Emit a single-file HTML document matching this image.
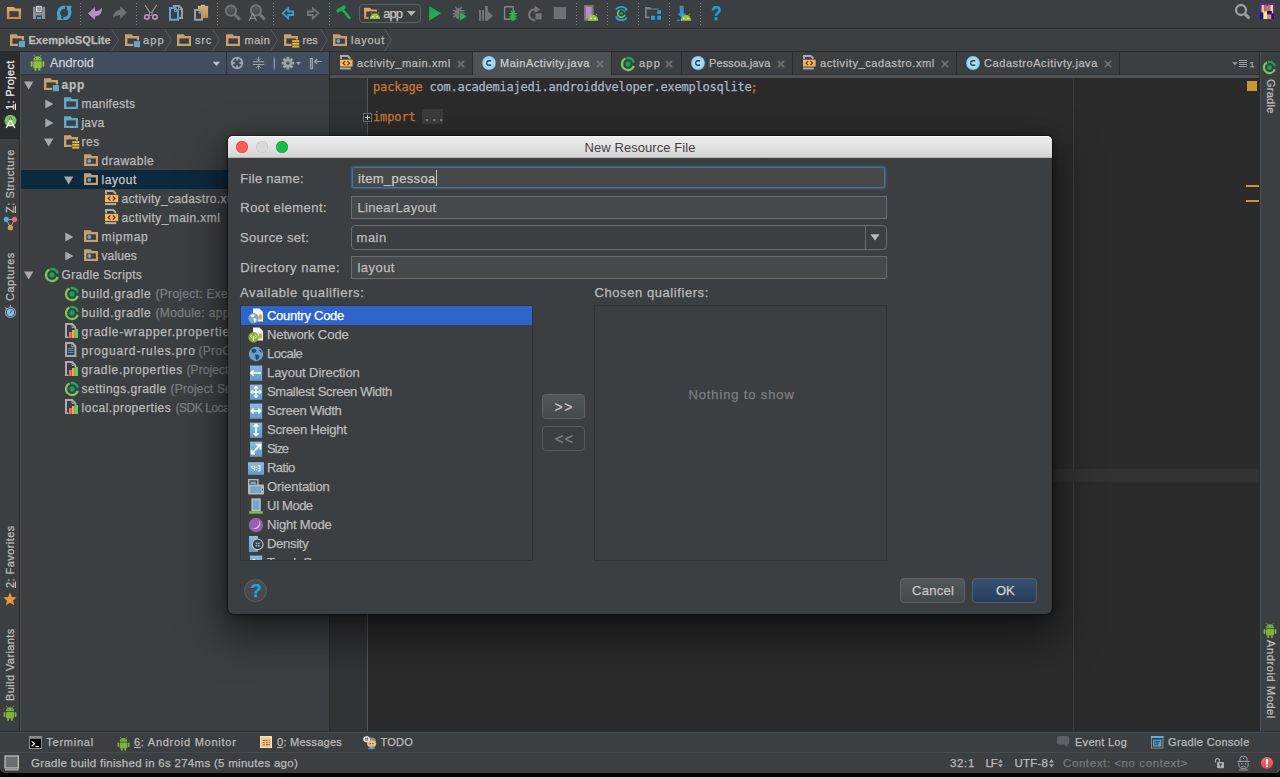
<!DOCTYPE html>
<html><head><meta charset="utf-8"><title>New Resource File</title>
<style>
html,body{margin:0;padding:0;background:#000;}
body{width:1280px;height:777px;position:relative;overflow:hidden;font-family:"Liberation Sans","DejaVu Sans",sans-serif;}
#root{position:absolute;left:0;top:0;width:1280px;height:777px;overflow:hidden;}
#root div,#root svg,#root span.t{position:absolute;}
span.t{white-space:nowrap;-webkit-text-stroke:0.25px currentColor;}
svg{overflow:visible;}
</style></head><body><div id="root">
<svg width="0" height="0" style="left:0;top:0"><defs>
<radialGradient id="cg" cx="0.5" cy="0.5" r="0.5"><stop offset="0" stop-color="#aee0fa"/><stop offset="0.75" stop-color="#a6dcf8"/><stop offset="1" stop-color="#8fd0f3"/></radialGradient>
<linearGradient id="qg" x1="0" y1="0" x2="0" y2="1"><stop offset="0" stop-color="#8bbbdc"/><stop offset="1" stop-color="#5f9bc6"/></linearGradient>
</defs></svg>
<div style="left:0px;top:0px;width:1280px;height:777px;background:#000000;"></div>
<div style="left:0px;top:0px;width:1280px;height:773px;background:#3c3f41;border-radius:0 0 5px 5px;"></div>
<div style="left:0px;top:28px;width:1280px;height:1px;background:#2a2c2d;"></div>
<div style="left:0px;top:29px;width:1280px;height:1px;background:#424547;"></div>
<div style="left:0px;top:51px;width:1280px;height:1px;background:#292b2c;"></div>
<div style="left:80px;top:3px;width:1px;height:22px;background:repeating-linear-gradient(#7a7d7f 0 1px,transparent 1px 3px);"></div>
<div style="left:136px;top:3px;width:1px;height:22px;background:repeating-linear-gradient(#7a7d7f 0 1px,transparent 1px 3px);"></div>
<div style="left:217px;top:3px;width:1px;height:22px;background:repeating-linear-gradient(#7a7d7f 0 1px,transparent 1px 3px);"></div>
<div style="left:273px;top:3px;width:1px;height:22px;background:repeating-linear-gradient(#7a7d7f 0 1px,transparent 1px 3px);"></div>
<div style="left:329px;top:3px;width:1px;height:22px;background:repeating-linear-gradient(#7a7d7f 0 1px,transparent 1px 3px);"></div>
<div style="left:576px;top:3px;width:1px;height:22px;background:repeating-linear-gradient(#7a7d7f 0 1px,transparent 1px 3px);"></div>
<div style="left:607px;top:3px;width:1px;height:22px;background:repeating-linear-gradient(#7a7d7f 0 1px,transparent 1px 3px);"></div>
<div style="left:638px;top:3px;width:1px;height:22px;background:repeating-linear-gradient(#7a7d7f 0 1px,transparent 1px 3px);"></div>
<div style="left:669px;top:3px;width:1px;height:22px;background:repeating-linear-gradient(#7a7d7f 0 1px,transparent 1px 3px);"></div>
<div style="left:700px;top:3px;width:1px;height:22px;background:repeating-linear-gradient(#7a7d7f 0 1px,transparent 1px 3px);"></div>
<svg style="left:0;top:0" width="1280" height="30" viewBox="0 0 1280 30"><defs><linearGradient id="og" x1="0" y1="0" x2="0" y2="1"><stop offset="0" stop-color="#dfac6a"/><stop offset="1" stop-color="#c5884a"/></linearGradient><linearGradient id="gg" x1="0" y1="0" x2="1" y2="1"><stop offset="0" stop-color="#17a04e"/><stop offset="1" stop-color="#27b85e"/></linearGradient><radialGradient id="lens" cx="0.5" cy="0.35" r="0.7"><stop offset="0" stop-color="#5a5c5e"/><stop offset="1" stop-color="#3c3f41"/></radialGradient></defs><path d="M6.9 6.9 H13.6 L15.4 8.6 H21 V19 H6.9 Z" fill="url(#og)"/><rect x="9.4" y="11.2" width="9.3" height="5.7" fill="#3c3f41"/><path d="M33 6.9 H45.1 V19 H33 Z" fill="#8f9294"/><rect x="35.6" y="5.8" width="6.6" height="6.4" rx="0.6" fill="#f2f2f2" stroke="#3c3f41" stroke-width="0.8"/><path d="M37 8 H41 M37 10 H41" stroke="#3a3c3e" stroke-width="1"/><rect x="36" y="15.4" width="5.8" height="3.6" fill="#3c3f41"/><rect x="37" y="17" width="4" height="2" fill="#3f9fdc"/><g fill="none" stroke="#4a9fd2" stroke-width="3.1"><path d="M63.23 18.41 A5.6 5.6 0 0 0 67.41 8.31"/><path d="M65.17 7.39 A5.6 5.6 0 0 0 60.99 17.49"/></g><path d="M65.4 5.7 H71.5 L70.6 11.6 Z" fill="#4a9fd2"/><path d="M63 20.1 H56.9 L57.8 14.2 Z" fill="#4a9fd2"/><path d="M87.9 13.4 L94.9 6.9 L95.1 11.2 Q99.8 11.2 102 7.6 Q102.6 15.6 95.1 16.6 L94.9 19.8 Z" fill="#b98bc9"/><path d="M126.9 12.5 L120.2 6.1 L120.2 9.8 Q113.5 10.5 113 18.1 Q115.5 15 120.2 15.2 L120.2 18.9 Z" fill="#6f7173"/><path d="M145 5 L151.6 15 M156.7 5 L150.1 15" stroke="#9b9d9f" stroke-width="1.2" fill="none"/><rect x="149.6" y="12.7" width="2.5" height="2.8" fill="#3c3f41" stroke="#9b9d9f" stroke-width="0.8"/><circle cx="146.9" cy="17" r="2.2" fill="none" stroke="#b98bc9" stroke-width="1.7"/><circle cx="155" cy="17" r="2.2" fill="none" stroke="#b98bc9" stroke-width="1.7"/><path d="M174 6 H179 L182 9 V17.9 H174 Z" fill="#3c3f41" stroke="#9b9d9f" stroke-width="2" stroke-linejoin="miter"/><path d="M178.6 6.4 V9.6 H181.8" fill="none" stroke="#9b9d9f" stroke-width="1"/><path d="M170 8.1 H175 L178 11.1 V19.75 H170 Z" fill="#3c3f41" stroke="#5ea4cf" stroke-width="2"/><path d="M174.6 8.6 V11.6 H177.8" fill="none" stroke="#5ea4cf" stroke-width="1"/><path d="M197.9 5.9 H208.1 V18.1 H197.9 Z" fill="url(#og)"/><rect x="200.8" y="4.7" width="4.2" height="1.6" rx="0.5" fill="#b9bbbd"/><path d="M195 9.9 H199.4 L202 12.5 V19.75 H195 Z" fill="#3c3f41" stroke="#9b9d9f" stroke-width="2"/><path d="M199 10.4 V13 H201.8" fill="none" stroke="#9b9d9f" stroke-width="1"/><circle cx="231" cy="10.6" r="5.1" fill="url(#lens)" stroke="#737577" stroke-width="1.9"/><path d="M235 14.8 L239 18.8" stroke="#737577" stroke-width="3" stroke-linecap="round"/><circle cx="255.9" cy="10.4" r="5.1" fill="url(#lens)" stroke="#737577" stroke-width="1.9"/><path d="M260 14.6 L264 18.6" stroke="#737577" stroke-width="3" stroke-linecap="round"/><path d="M249.2 20.8 L252.8 13.2 L256.4 20.8 M250.6 18.2 H255" stroke="#909294" stroke-width="1.1" fill="none"/><path d="M282.6 13.2 L288.2 8.2 V11.5 H293.2 V15 H288.2 V18.3 Z" fill="#3c3f41" stroke="#3d9ad6" stroke-width="1.8" stroke-linejoin="miter"/><path d="M318.4 13.2 L312.8 8.2 V11.5 H307.8 V15 H312.8 V18.3 Z" fill="#3c3f41" stroke="#737577" stroke-width="1.8" stroke-linejoin="miter"/><path d="M338.2 10.8 L344 7.2" stroke="#1faa55" stroke-width="3.6" stroke-linecap="round"/><path d="M342 9.2 L349.4 17.8" stroke="#1faa55" stroke-width="2.7" stroke-linecap="round"/><path d="M364 7.8 H370 L371.4 9.6 H376.9 V18.9 H364 Z" fill="url(#og)"/><rect x="366.3" y="11.6" width="8.6" height="5.3" fill="#3c3f41"/><rect x="368.6" y="11.6" width="9" height="8" fill="#3c3f41"/><path d="M369.8 19 A5.15 5.699999999999999 0 0 1 380.1 19 Z" fill="#9cc03c"/><path d="M372.0 13.9 L371.1 12.3 M377.90000000000003 13.9 L378.8 12.3" stroke="#9cc03c" stroke-width="0.8"/><circle cx="372.89" cy="16.72" r="0.75" fill="#fff"/><circle cx="377.01" cy="16.72" r="0.75" fill="#fff"/><path d="M406.9 10.9 H415.8 L411.35 16 Z" fill="#b4b4b4"/><path d="M429.2 5.9 L441 13.3 L429.2 20.7 Z" fill="url(#gg)"/><ellipse cx="458.6" cy="13.6" rx="4.1" ry="5.6" fill="#737577"/><path d="M455.4 6.6 L457 9 M461.8 6.6 L460.2 9 M452.8 10.6 H455.4 M452.8 13.6 H455 M453 17 L455.4 16 M462 10.6 H464.6 M462 13.2 H464.8" stroke="#737577" stroke-width="1.4"/><path d="M459.7 11.6 L467 16.4 L459.7 21.3 Z" fill="#26b559" stroke="#3c3f41" stroke-width="0.7"/><rect x="479" y="10" width="2" height="10.8" fill="#737577"/><rect x="482" y="10" width="2" height="10.8" fill="#737577"/><rect x="485" y="6" width="2.8" height="14.8" fill="#737577"/><path d="M487.2 10.6 L493 15.7 L487.2 20.8 Z" fill="#737577"/><path d="M504.6 6.7 H513.1 V11.5 M510.5 19.3 H504.6 V6.7" fill="none" stroke="#828486" stroke-width="1.4"/><ellipse cx="513" cy="16.2" rx="2.5" ry="4.6" fill="#26b559"/><path d="M509.2 13.6 H516.8 M509 16.2 H517 M509.2 18.8 H516.8 M511 10.6 L512 12.2 M515 10.6 L514 12.2" stroke="#26b559" stroke-width="1.1"/><path d="M535.4 9.4 A5.4 5.4 0 1 0 535.6 20" fill="none" stroke="#737577" stroke-width="2.2"/><path d="M534.6 5.6 L540.6 9.4 L534.6 13 Z" fill="#737577"/><rect x="535.1" y="13" width="6.9" height="6.8" fill="#737577" stroke="#3c3f41" stroke-width="0.6"/><rect x="553.8" y="7" width="12.2" height="12" fill="#6e7072"/><rect x="584.1" y="5.1" width="9.4" height="15.6" fill="#7b7d7f"/><rect x="586" y="7" width="5.6" height="11.4" fill="#c08ac8"/><path d="M587.9 20.8 A5.15 5.984999999999999 0 0 1 598.1999999999999 20.8 Z" fill="#9cc03c"/><path d="M590.1 15.4 L589.1999999999999 13.8 M595.9999999999999 15.4 L596.9 13.8" stroke="#9cc03c" stroke-width="0.8"/><circle cx="590.99" cy="18.406" r="0.75" fill="#fff"/><circle cx="595.11" cy="18.406" r="0.75" fill="#fff"/><g fill="none" stroke="#19a7e8" stroke-width="1.7"><path d="M616 9.6 A6.6 6.6 0 0 1 626.8 9.6"/><path d="M626.8 17.4 A6.6 6.6 0 0 1 616 17.4"/></g><path d="M625.6 7.6 L628 10.6 L624.6 10.4 Z" fill="#19a7e8"/><path d="M617.2 19.4 L614.8 16.4 L618.2 16.6 Z" fill="#19a7e8"/><path d="M620.4 9.8 A3.8 3.8 0 0 1 625 12.4" fill="none" stroke="#1a9f58" stroke-width="1.6"/><path d="M625 14.8 A3.8 3.8 0 1 1 619.6 10.2" fill="none" stroke="#84c44c" stroke-width="1.6"/><circle cx="621.4" cy="13.5" r="1.6" fill="#12a15b"/><path d="M645 7 H650 L651.2 8.6 H658.5 V9.6 H646.8 V16.6 H649.6 V18.25 H645 Z" fill="#7e8082"/><rect x="657.25" y="10.1" width="3.75" height="3.9" fill="#1ba1e2"/><rect x="651" y="15.75" width="4" height="4" fill="#1ba1e2"/><rect x="657.25" y="15.75" width="3.75" height="4" fill="#1ba1e2"/><defs><linearGradient id="sg" x1="0" y1="0" x2="0" y2="1"><stop offset="0" stop-color="#3e86b8"/><stop offset="1" stop-color="#1ba1e2"/></linearGradient></defs><path d="M679.75 5.75 H683.75 V13.6 H686.2 L681.75 17.8 L677.3 13.6 H679.75 Z" fill="url(#sg)"/><rect x="677" y="19.6" width="3.4" height="1.2" fill="#1ba1e2"/><rect x="680.4" y="14" width="10" height="7" fill="#3c3f41" opacity="0"/><path d="M680.75 20.8 A5.15 5.984999999999999 0 0 1 691.05 20.8 Z" fill="#9cc03c"/><path d="M682.95 15.4 L682.05 13.8 M688.8499999999999 15.4 L689.75 13.8" stroke="#9cc03c" stroke-width="0.8"/><circle cx="683.84" cy="18.406" r="0.75" fill="#fff"/><circle cx="687.96" cy="18.406" r="0.75" fill="#fff"/></svg>
<div style="left:359px;top:4px;width:62px;height:19px;border:1px solid #5e6163;border-radius:4px;box-sizing:border-box;"></div>
<span class="t" id="t1" style="left:383.2px;top:5.70px;font-size:13px;line-height:15.60px;color:#c4c4c4;letter-spacing:-0.902px;">app</span>
<span class="t" id="t2" style="left:710.6px;top:1.40px;font-size:20.5px;line-height:24.60px;color:#1ba1e2;font-weight:bold;transform:scaleX(.86);transform-origin:0 0;">?</span>
<svg style="left:1230px;top:0px;" width="24" height="24" viewBox="0 0 24 24"><circle cx="11" cy="10" r="5" fill="none" stroke="#999b9d" stroke-width="2.3"/><path d="M15.2 14.2 L18.4 17.4" stroke="#999b9d" stroke-width="3.2" stroke-linecap="round"/></svg>
<svg style="left:1259px;top:3px;" width="16" height="16" viewBox="0 0 16 16"><defs><filter id="avb" x="-5%" y="-5%" width="110%" height="110%"><feGaussianBlur stdDeviation="0.45"/></filter><clipPath id="avc"><rect width="16" height="16"/></clipPath></defs><rect width="16" height="16" fill="#4d2a96"/><g clip-path="url(#avc)"><g filter="url(#avb)"><rect x="0" y="0" width="16" height="16" fill="#5a2d9c"/><rect x="2.6" y="2" width="2.4" height="8" fill="#f0c868"/><rect x="5.2" y="2.2" width="1.4" height="6" fill="#c8785a"/><rect x="6.6" y="1.2" width="3.2" height="7.5" fill="#d9707a"/><rect x="7.4" y="0.6" width="1.8" height="2" fill="#3b2060"/><rect x="10.2" y="2" width="1.6" height="7" fill="#d88a70"/><rect x="11.6" y="2" width="2.4" height="9" fill="#f4dc80"/><rect x="4.2" y="8.4" width="4.2" height="7.6" fill="#f6e88c"/><rect x="8.2" y="11" width="4.4" height="5" fill="#e08a80"/><rect x="0.6" y="9.4" width="3.6" height="6.6" fill="#1c1478"/><rect x="8.2" y="8" width="4.6" height="3.4" fill="#241070"/><rect x="12.4" y="10.4" width="3" height="5.6" fill="#1c1478"/><rect x="0" y="0" width="16" height="1.2" fill="#5a2d9c"/><rect x="0" y="0" width="1" height="16" fill="#4a2590"/><rect x="15" y="0" width="1" height="16" fill="#5a2d9c"/></g></g></svg>
<svg style="left:10px;top:33.8px;" width="16" height="14" viewBox="0 0 16 14"><path d="M0 0.2 H6.6 L8 2 H14 V12 H0 Z" fill="#c9a06c"/><rect x="2.4" y="4.4" width="9.5" height="5.4" fill="#3c3f41"/><rect x="8.2" y="6.4" width="7" height="7" fill="#3c3f41"/><rect x="8.9" y="7.1" width="6.1" height="6.1" fill="#62a6cf"/></svg>
<span class="t" id="t3" style="left:28.4px;top:34.29px;font-size:11px;line-height:13.20px;color:#bbbbbb;font-weight:bold;letter-spacing:0.084px;">ExemploSQLite</span>
<svg style="left:110.6px;top:29px;" width="9" height="22" viewBox="0 0 9 22"><path d="M0.5 0 L7.6 11 L0.5 22" fill="none" stroke="#5a5d5f" stroke-width="1"/></svg>
<svg style="left:125px;top:33.8px;" width="16" height="14" viewBox="0 0 16 14"><path d="M0 0.2 H6.6 L8 2 H14 V12 H0 Z" fill="#c9a06c"/><rect x="2.4" y="4.4" width="9.5" height="5.4" fill="#3c3f41"/><rect x="8.2" y="6.4" width="7" height="7" fill="#3c3f41"/><rect x="8.9" y="7.1" width="6.1" height="6.1" fill="#62a6cf"/></svg>
<span class="t" id="t4" style="left:143px;top:34.29px;font-size:11px;line-height:13.20px;color:#bbbbbb;letter-spacing:1.120px;">app</span>
<svg style="left:163.6px;top:29px;" width="9" height="22" viewBox="0 0 9 22"><path d="M0.5 0 L7.6 11 L0.5 22" fill="none" stroke="#5a5d5f" stroke-width="1"/></svg>
<svg style="left:177px;top:33.8px;" width="16" height="14" viewBox="0 0 16 14"><path d="M0 0.2 H6.6 L8 2 H14 V12 H0 Z" fill="#c9a06c"/><rect x="2.4" y="4.4" width="9.5" height="5.4" fill="#3c3f41"/></svg>
<span class="t" id="t5" style="left:195px;top:34.29px;font-size:11px;line-height:13.20px;color:#bbbbbb;letter-spacing:0.814px;">src</span>
<svg style="left:211.6px;top:29px;" width="9" height="22" viewBox="0 0 9 22"><path d="M0.5 0 L7.6 11 L0.5 22" fill="none" stroke="#5a5d5f" stroke-width="1"/></svg>
<svg style="left:226px;top:33.8px;" width="16" height="14" viewBox="0 0 16 14"><path d="M0 0.2 H6.6 L8 2 H14 V12 H0 Z" fill="#c9a06c"/><rect x="2.4" y="4.4" width="9.5" height="5.4" fill="#3c3f41"/></svg>
<span class="t" id="t6" style="left:244.5px;top:34.29px;font-size:11px;line-height:13.20px;color:#bbbbbb;letter-spacing:0.485px;">main</span>
<svg style="left:269.6px;top:29px;" width="9" height="22" viewBox="0 0 9 22"><path d="M0.5 0 L7.6 11 L0.5 22" fill="none" stroke="#5a5d5f" stroke-width="1"/></svg>
<svg style="left:284px;top:33.8px;" width="16" height="14" viewBox="0 0 16 14"><path d="M0 0.2 H6.6 L8 2 H14 V12 H0 Z" fill="#c9a06c"/><rect x="2.4" y="4.4" width="9.5" height="5.4" fill="#3c3f41"/><rect x="7.6" y="5.6" width="8" height="8.6" fill="#3c3f41"/><rect x="8.3" y="6.2" width="6.9" height="1.9" fill="#f2c53d"/><rect x="8.3" y="8.9" width="6.9" height="1.9" fill="#f2c53d"/><rect x="8.3" y="11.6" width="6.9" height="1.9" fill="#f2c53d"/><rect x="10.2" y="6.2" width="0.7" height="7.3" fill="#a87a10" opacity=".65"/><rect x="12.6" y="6.2" width="0.7" height="7.3" fill="#a87a10" opacity=".65"/></svg>
<span class="t" id="t7" style="left:302.5px;top:34.29px;font-size:11px;line-height:13.20px;color:#bbbbbb;letter-spacing:0.009px;">res</span>
<svg style="left:319.6px;top:29px;" width="9" height="22" viewBox="0 0 9 22"><path d="M0.5 0 L7.6 11 L0.5 22" fill="none" stroke="#5a5d5f" stroke-width="1"/></svg>
<svg style="left:333px;top:33.8px;" width="16" height="14" viewBox="0 0 16 14"><path d="M0 0.2 H6.6 L8 2 H14 V12 H0 Z" fill="#c9a06c"/><rect x="2.4" y="4.4" width="9.5" height="5.4" fill="#3c3f41"/><circle cx="5.3" cy="7.1" r="2" fill="#62a6cf"/></svg>
<span class="t" id="t8" style="left:351px;top:34.29px;font-size:11px;line-height:13.20px;color:#bbbbbb;letter-spacing:0.788px;">layout</span>
<svg style="left:384.1px;top:29px;" width="9" height="22" viewBox="0 0 9 22"><path d="M0.5 0 L7.6 11 L0.5 22" fill="none" stroke="#5a5d5f" stroke-width="1"/></svg>
<div style="left:0px;top:52px;width:20px;height:679px;background:#3c3f41;"></div>
<div style="left:19px;top:52px;width:1px;height:679px;background:#28292a;"></div>
<div style="left:20px;top:52px;width:1px;height:679px;background:#4f5153;"></div>
<div style="left:0px;top:52px;width:19px;height:87px;background:#2a2c2d;"></div>
<span class="t" id="t9" style="left:3.0px;top:110px;transform:rotate(-90deg);transform-origin:0 0;font-size:11px;line-height:14px;color:#e8e8e8;letter-spacing:0.313px;"><u>1</u>: Project</span>
<svg style="left:3px;top:114px;" width="15" height="15" viewBox="0 0 15 15"><circle cx="7.5" cy="6.8" r="6" fill="#7cc25a"/><path d="M7.5 2.6 L9 5.4 L7.5 8.2 L6 5.4 Z" fill="none" stroke="#6b6b6b" stroke-width="1"/><path d="M7.3 6.2 L3.2 14 M7.7 6.2 L11.8 14" stroke="#f4f4f4" stroke-width="1.4"/><path d="M4.6 10.6 Q7.5 12 10.4 10.6" stroke="#f4f4f4" stroke-width="1.2" fill="none"/></svg>
<span class="t" id="t10" style="left:3.0px;top:213px;transform:rotate(-90deg);transform-origin:0 0;font-size:11px;line-height:14px;color:#bbbbbb;letter-spacing:0.529px;"><u>Z</u>: Structure</span>
<svg style="left:3px;top:217px;" width="15" height="15" viewBox="0 0 15 15"><path d="M3.3 2.4 H11.5 M3.3 2.4 L7.4 10.7 M11.5 2.4 L7.4 10.7" stroke="#a4a7a9" stroke-width="1"/><circle cx="3.3" cy="2.4" r="2.6" fill="#55a8e0"/><circle cx="11.5" cy="2.4" r="2.6" fill="#ec6b6b"/><circle cx="7.4" cy="10.7" r="2.6" fill="#dc9a58"/></svg>
<span class="t" id="t11" style="left:3.0px;top:301px;transform:rotate(-90deg);transform-origin:0 0;font-size:11px;line-height:14px;color:#bbbbbb;letter-spacing:0.523px;">Captures</span>
<svg style="left:3px;top:304px;" width="15" height="15" viewBox="0 0 15 15"><circle cx="7.45" cy="8.4" r="5" fill="none" stroke="#9a9c9e" stroke-width="1.1"/><circle cx="7.45" cy="8.4" r="3.7" fill="#6ec3f5"/><path d="M7 9 L9.2 6.2" stroke="#4a4d50" stroke-width="1"/><rect x="6.9" y="0.8" width="1.1" height="2.4" fill="#9a9c9e"/><path d="M2.2 3.4 L3.9 5.1" stroke="#9a9c9e" stroke-width="1.3"/></svg>
<span class="t" id="t12" style="left:3.0px;top:588px;transform:rotate(-90deg);transform-origin:0 0;font-size:11px;line-height:14px;color:#bbbbbb;letter-spacing:0.438px;"><u>2</u>: Favorites</span>
<svg style="left:3px;top:592px;" width="14" height="14" viewBox="0 0 14 14"><path d="M7 0.6 L8.9 5 L13.6 5.4 L10 8.5 L11.1 13.2 L7 10.7 L2.9 13.2 L4 8.5 L0.4 5.4 L5.1 5 Z" fill="#e8983c"/></svg>
<span class="t" id="t13" style="left:3.0px;top:701px;transform:rotate(-90deg);transform-origin:0 0;font-size:11px;line-height:14px;color:#bbbbbb;letter-spacing:0.403px;">Build Variants</span>
<svg style="left:3px;top:705px;" width="14" height="16" viewBox="0 0 14 16"><path d="M3 6.2 a4 4 0 0 1 8 0 Z" fill="#7fb238"/><rect x="3" y="6.9" width="8" height="6.3" rx="0.8" fill="#7fb238"/><rect x="0.6" y="6.9" width="1.8" height="5" rx="0.9" fill="#7fb238"/><rect x="11.6" y="6.9" width="1.8" height="5" rx="0.9" fill="#7fb238"/><rect x="4.2" y="12.5" width="1.9" height="3.3" rx="0.9" fill="#7fb238"/><rect x="7.9" y="12.5" width="1.9" height="3.3" rx="0.9" fill="#7fb238"/><path d="M4.4 2.6 L3.4 0.9 M9.6 2.6 L10.6 0.9" stroke="#7fb238" stroke-width="0.7"/><circle cx="5.2" cy="4.3" r="0.55" fill="#3c3f41"/><circle cx="8.8" cy="4.3" r="0.55" fill="#3c3f41"/></svg>
<div style="left:1259px;top:52px;width:1px;height:679px;background:#28292a;"></div>
<div style="left:1260px;top:52px;width:1px;height:679px;background:#4f5153;"></div>
<div style="left:1261px;top:52px;width:19px;height:679px;background:#3c3f41;"></div>
<svg style="left:1262px;top:60px;" width="15" height="15" viewBox="0 0 16 16"><path d="M6.45 2.2 A6 6 0 0 1 13.8 6.45" fill="none" stroke="#1fa65a" stroke-width="2.3"/><path d="M13.7 9.85 A6 6 0 1 1 5.46 2.56" fill="none" stroke="#7cc757" stroke-width="2.3"/><circle cx="8" cy="8" r="2.7" fill="#12a15b"/></svg>
<span class="t" id="t14" style="left:1277.5px;top:79px;transform:rotate(90deg);transform-origin:0 0;font-size:11px;line-height:14px;color:#bbbbbb;letter-spacing:0.254px;">Gradle</span>
<svg style="left:1262.5px;top:622px;" width="14" height="16" viewBox="0 0 14 16"><path d="M3 6.2 a4 4 0 0 1 8 0 Z" fill="#7fb238"/><rect x="3" y="6.9" width="8" height="6.3" rx="0.8" fill="#7fb238"/><rect x="0.6" y="6.9" width="1.8" height="5" rx="0.9" fill="#7fb238"/><rect x="11.6" y="6.9" width="1.8" height="5" rx="0.9" fill="#7fb238"/><rect x="4.2" y="12.5" width="1.9" height="3.3" rx="0.9" fill="#7fb238"/><rect x="7.9" y="12.5" width="1.9" height="3.3" rx="0.9" fill="#7fb238"/><path d="M4.4 2.6 L3.4 0.9 M9.6 2.6 L10.6 0.9" stroke="#7fb238" stroke-width="0.7"/><circle cx="5.2" cy="4.3" r="0.55" fill="#3c3f41"/><circle cx="8.8" cy="4.3" r="0.55" fill="#3c3f41"/></svg>
<span class="t" id="t15" style="left:1277.5px;top:640px;transform:rotate(90deg);transform-origin:0 0;font-size:11px;line-height:14px;color:#bbbbbb;letter-spacing:0.614px;">Android Model</span>
<div style="left:21px;top:52px;width:308px;height:22px;background:#424e60;"></div>
<div style="left:21px;top:74px;width:308px;height:1px;background:#2c3340;"></div>
<div style="left:329px;top:52px;width:1px;height:679px;background:#282a2b;"></div>
<svg style="left:30px;top:54px;" width="15" height="17" viewBox="0 0 14 16"><path d="M3 6.2 a4 4 0 0 1 8 0 Z" fill="#8dc03a"/><rect x="3" y="6.9" width="8" height="6.3" rx="0.8" fill="#8dc03a"/><rect x="0.6" y="6.9" width="1.8" height="5" rx="0.9" fill="#8dc03a"/><rect x="11.6" y="6.9" width="1.8" height="5" rx="0.9" fill="#8dc03a"/><rect x="4.2" y="12.5" width="1.9" height="3.3" rx="0.9" fill="#8dc03a"/><rect x="7.9" y="12.5" width="1.9" height="3.3" rx="0.9" fill="#8dc03a"/><path d="M4.4 2.6 L3.4 0.9 M9.6 2.6 L10.6 0.9" stroke="#8dc03a" stroke-width="0.7"/><circle cx="5.2" cy="4.3" r="0.55" fill="#424e60"/><circle cx="8.8" cy="4.3" r="0.55" fill="#424e60"/></svg>
<span class="t" id="t16" style="left:50px;top:56.17px;font-size:12.5px;line-height:15.00px;color:#d0d3d6;letter-spacing:0.118px;">Android</span>
<svg style="left:0;top:0" width="340" height="76" viewBox="0 0 340 76"><path d="M212.8 61.7 H220 L216.4 66 Z" fill="#c0c4c8"/><rect x="226" y="52" width="1" height="22" fill="#2c3440"/><circle cx="237.1" cy="63" r="5.3" fill="none" stroke="#9ea3a9" stroke-width="1.8"/><path d="M237.1 58 V60.6 M237.1 65.4 V68 M232.1 63 H234.7 M239.5 63 H242.1" stroke="#9ea3a9" stroke-width="1.8"/><path d="M253 61.8 H264.2 M253 64.5 H264.2" stroke="#9ea3a9" stroke-width="1"/><path d="M258.6 56.8 V60.6 M256.4 58.6 L258.6 60.8 L260.8 58.6 M258.6 69.6 V65.8 M256.4 67.8 L258.6 65.6 L260.8 67.8" stroke="#9ea3a9" stroke-width="1" fill="none"/><defs><linearGradient id="hs" x1="0" y1="0" x2="0" y2="1"><stop offset="0" stop-color="#424e60"/><stop offset=".3" stop-color="#8a96a6"/><stop offset=".7" stop-color="#8a96a6"/><stop offset="1" stop-color="#424e60"/></linearGradient></defs><rect x="273.6" y="55.6" width="1.5" height="15.6" fill="url(#hs)"/><g transform="translate(287.9 63.1)"><g fill="#9ea3a9"><rect x="-1.35" y="-6.3" width="2.7" height="3" transform="rotate(0)"/><rect x="-1.35" y="-6.3" width="2.7" height="3" transform="rotate(45)"/><rect x="-1.35" y="-6.3" width="2.7" height="3" transform="rotate(90)"/><rect x="-1.35" y="-6.3" width="2.7" height="3" transform="rotate(135)"/><rect x="-1.35" y="-6.3" width="2.7" height="3" transform="rotate(180)"/><rect x="-1.35" y="-6.3" width="2.7" height="3" transform="rotate(225)"/><rect x="-1.35" y="-6.3" width="2.7" height="3" transform="rotate(270)"/><rect x="-1.35" y="-6.3" width="2.7" height="3" transform="rotate(315)"/></g><circle r="4.3" fill="#9ea3a9"/><circle r="1.7" fill="#424e60"/></g><path d="M296.1 62 H301.1 L298.6 64.9 Z" fill="#9ea3a9"/><rect x="310.4" y="58.5" width="2.2" height="10.2" fill="#6b7480" stroke="#9ea3a9" stroke-width="1"/><path d="M314.6 61.5 H321.8 M317.2 59 L314.6 61.5 L317.2 64" stroke="#9ea3a9" stroke-width="1.1" fill="none"/></svg>
<svg style="left:24px;top:81px;" width="10" height="9" viewBox="0 0 10 9"><path d="M0 0.4 H9.4 L4.7 8.6 Z" fill="#a8a8a8"/></svg>
<svg style="left:44px;top:78px;" width="16" height="14" viewBox="0 0 16 14"><path d="M0 0.2 H6.6 L8 2 H14 V12 H0 Z" fill="#c9a06c"/><rect x="2.4" y="4.4" width="9.5" height="5.4" fill="#3c3f41"/><rect x="8.2" y="6.4" width="7" height="7" fill="#3c3f41"/><rect x="8.9" y="7.1" width="6.1" height="6.1" fill="#62a6cf"/></svg>
<span class="t" id="t17" style="left:61.5px;top:78.24px;font-size:12px;line-height:14.40px;color:#bbbbbb;font-weight:bold;letter-spacing:0.728px;">app</span>
<svg style="left:45px;top:99px;" width="9" height="10" viewBox="0 0 9 10"><path d="M0.3 0.4 L8.4 4.9 L0.3 9.4 Z" fill="#a8a8a8"/></svg>
<svg style="left:64px;top:97px;" width="16" height="14" viewBox="0 0 16 14"><path d="M0 0.2 H6.6 L8 2 H14 V12 H0 Z" fill="#62a6cf"/><rect x="2.4" y="4.4" width="9.5" height="5.4" fill="#3c3f41"/></svg>
<span class="t" id="t18" style="left:81.5px;top:97.24px;font-size:12px;line-height:14.40px;color:#bbbbbb;letter-spacing:0.268px;">manifests</span>
<svg style="left:45px;top:118px;" width="9" height="10" viewBox="0 0 9 10"><path d="M0.3 0.4 L8.4 4.9 L0.3 9.4 Z" fill="#a8a8a8"/></svg>
<svg style="left:64px;top:116px;" width="16" height="14" viewBox="0 0 16 14"><path d="M0 0.2 H6.6 L8 2 H14 V12 H0 Z" fill="#62a6cf"/><rect x="2.4" y="4.4" width="9.5" height="5.4" fill="#3c3f41"/></svg>
<span class="t" id="t19" style="left:81.5px;top:116.24px;font-size:12px;line-height:14.40px;color:#bbbbbb;letter-spacing:0.195px;">java</span>
<svg style="left:44px;top:138px;" width="10" height="9" viewBox="0 0 10 9"><path d="M0 0.4 H9.4 L4.7 8.6 Z" fill="#a8a8a8"/></svg>
<svg style="left:64px;top:135px;" width="16" height="14" viewBox="0 0 16 14"><path d="M0 0.2 H6.6 L8 2 H14 V12 H0 Z" fill="#c9a06c"/><rect x="2.4" y="4.4" width="9.5" height="5.4" fill="#3c3f41"/><rect x="7.6" y="5.6" width="8" height="8.6" fill="#3c3f41"/><rect x="8.3" y="6.2" width="6.9" height="1.9" fill="#f2c53d"/><rect x="8.3" y="8.9" width="6.9" height="1.9" fill="#f2c53d"/><rect x="8.3" y="11.6" width="6.9" height="1.9" fill="#f2c53d"/><rect x="10.2" y="6.2" width="0.7" height="7.3" fill="#a87a10" opacity=".65"/><rect x="12.6" y="6.2" width="0.7" height="7.3" fill="#a87a10" opacity=".65"/></svg>
<span class="t" id="t20" style="left:81.5px;top:135.24px;font-size:12px;line-height:14.40px;color:#bbbbbb;letter-spacing:0.564px;">res</span>
<svg style="left:84px;top:154px;" width="16" height="14" viewBox="0 0 16 14"><path d="M0 0.2 H6.6 L8 2 H14 V12 H0 Z" fill="#c9a06c"/><rect x="2.4" y="4.4" width="9.5" height="5.4" fill="#3c3f41"/><circle cx="5.3" cy="7.1" r="2" fill="#62a6cf"/></svg>
<span class="t" id="t21" style="left:101.5px;top:154.24px;font-size:12px;line-height:14.40px;color:#bbbbbb;letter-spacing:0.514px;">drawable</span>
<div style="left:21px;top:170px;width:308px;height:19px;background:#0d293e;"></div>
<svg style="left:64px;top:176px;" width="10" height="9" viewBox="0 0 10 9"><path d="M0 0.4 H9.4 L4.7 8.6 Z" fill="#a8a8a8"/></svg>
<svg style="left:84px;top:173px;" width="16" height="14" viewBox="0 0 16 14"><path d="M0 0.2 H6.6 L8 2 H14 V12 H0 Z" fill="#c9a06c"/><rect x="2.4" y="4.4" width="9.5" height="5.4" fill="#0d293e"/><circle cx="5.3" cy="7.1" r="2" fill="#62a6cf"/></svg>
<span class="t" id="t22" style="left:101.5px;top:173.24px;font-size:12px;line-height:14.40px;color:#c8c8c8;letter-spacing:0.554px;">layout</span>
<svg style="left:104.9px;top:190px;" width="14" height="16" viewBox="0 0 14 16"><path d="M0 0 H8.6 L11.2 2.6 V4.2 H9.2 V3.4 L7.8 2 H2 V4.2 H0 Z" fill="#a9abad"/><rect x="0" y="4.9" width="13.2" height="7.2" fill="#f9b258"/><path d="M5.4 6.4 L3.2 8.5 L5.4 10.6 M7.8 6.4 L10 8.5 L7.8 10.6" stroke="#4a3a25" stroke-width="1.2" fill="none"/><rect x="0" y="13" width="11.2" height="2.1" fill="#a9abad"/></svg>
<span class="t" id="t23" style="left:121.5px;top:192.24px;font-size:12px;line-height:14.40px;color:#bbbbbb;letter-spacing:0.346px;">activity_cadastro.xml</span>
<svg style="left:104.9px;top:209px;" width="14" height="16" viewBox="0 0 14 16"><path d="M0 0 H8.6 L11.2 2.6 V4.2 H9.2 V3.4 L7.8 2 H2 V4.2 H0 Z" fill="#a9abad"/><rect x="0" y="4.9" width="13.2" height="7.2" fill="#f9b258"/><path d="M5.4 6.4 L3.2 8.5 L5.4 10.6 M7.8 6.4 L10 8.5 L7.8 10.6" stroke="#4a3a25" stroke-width="1.2" fill="none"/><rect x="0" y="13" width="11.2" height="2.1" fill="#a9abad"/></svg>
<span class="t" id="t24" style="left:121.5px;top:211.24px;font-size:12px;line-height:14.40px;color:#bbbbbb;letter-spacing:0.434px;">activity_main.xml</span>
<svg style="left:65px;top:232px;" width="9" height="10" viewBox="0 0 9 10"><path d="M0.3 0.4 L8.4 4.9 L0.3 9.4 Z" fill="#a8a8a8"/></svg>
<svg style="left:84px;top:230px;" width="16" height="14" viewBox="0 0 16 14"><path d="M0 0.2 H6.6 L8 2 H14 V12 H0 Z" fill="#c9a06c"/><rect x="2.4" y="4.4" width="9.5" height="5.4" fill="#3c3f41"/><circle cx="5.3" cy="7.1" r="2" fill="#62a6cf"/></svg>
<span class="t" id="t25" style="left:101.5px;top:230.24px;font-size:12px;line-height:14.40px;color:#bbbbbb;letter-spacing:0.722px;">mipmap</span>
<svg style="left:65px;top:251px;" width="9" height="10" viewBox="0 0 9 10"><path d="M0.3 0.4 L8.4 4.9 L0.3 9.4 Z" fill="#a8a8a8"/></svg>
<svg style="left:84px;top:249px;" width="16" height="14" viewBox="0 0 16 14"><path d="M0 0.2 H6.6 L8 2 H14 V12 H0 Z" fill="#c9a06c"/><rect x="2.4" y="4.4" width="9.5" height="5.4" fill="#3c3f41"/><circle cx="5.3" cy="7.1" r="2" fill="#62a6cf"/></svg>
<span class="t" id="t26" style="left:101.5px;top:249.24px;font-size:12px;line-height:14.40px;color:#bbbbbb;letter-spacing:0.122px;">values</span>
<svg style="left:24px;top:271px;" width="10" height="9" viewBox="0 0 10 9"><path d="M0 0.4 H9.4 L4.7 8.6 Z" fill="#a8a8a8"/></svg>
<svg style="left:43.5px;top:266.5px;" width="16" height="16" viewBox="0 0 16 16"><path d="M6.45 2.2 A6 6 0 0 1 13.8 6.45" fill="none" stroke="#1fa65a" stroke-width="2.3"/><path d="M13.7 9.85 A6 6 0 1 1 5.46 2.56" fill="none" stroke="#7cc757" stroke-width="2.3"/><circle cx="8" cy="8" r="2.7" fill="#12a15b"/></svg>
<span class="t" id="t27" style="left:61.5px;top:268.24px;font-size:12px;line-height:14.40px;color:#bbbbbb;letter-spacing:0.328px;">Gradle Scripts</span>
<svg style="left:63.5px;top:285.5px;" width="16" height="16" viewBox="0 0 16 16"><path d="M6.45 2.2 A6 6 0 0 1 13.8 6.45" fill="none" stroke="#1fa65a" stroke-width="2.3"/><path d="M13.7 9.85 A6 6 0 1 1 5.46 2.56" fill="none" stroke="#7cc757" stroke-width="2.3"/><circle cx="8" cy="8" r="2.7" fill="#12a15b"/></svg>
<span class="t" id="t28" style="left:81.5px;top:287.24px;font-size:12px;line-height:14.40px;color:#bbbbbb;letter-spacing:0.659px;">build.gradle</span>
<span class="t" id="t29" style="left:155.5px;top:287.24px;font-size:12px;line-height:14.40px;color:#7d8082;letter-spacing:0.300px;">(Project: ExemploSQLite)</span>
<svg style="left:63.5px;top:304.5px;" width="16" height="16" viewBox="0 0 16 16"><path d="M6.45 2.2 A6 6 0 0 1 13.8 6.45" fill="none" stroke="#1fa65a" stroke-width="2.3"/><path d="M13.7 9.85 A6 6 0 1 1 5.46 2.56" fill="none" stroke="#7cc757" stroke-width="2.3"/><circle cx="8" cy="8" r="2.7" fill="#12a15b"/></svg>
<span class="t" id="t30" style="left:81.5px;top:306.24px;font-size:12px;line-height:14.40px;color:#bbbbbb;letter-spacing:0.659px;">build.gradle</span>
<span class="t" id="t31" style="left:155.5px;top:306.24px;font-size:12px;line-height:14.40px;color:#7d8082;letter-spacing:0.354px;">(Module: app)</span>
<svg style="left:64.9px;top:323px;" width="14" height="15" viewBox="0 0 14 15"><path d="M0 0 H7.6 L11.3 3.9 V7 H9.6 V4.8 L6.8 2 H2 V13.4 H3.6 V15 H0 Z" fill="#a9abad"/><path d="M7 2 V4.5 H9.4" fill="none" stroke="#a9abad" stroke-width="0.9"/><rect x="4" y="9" width="2.7" height="6" fill="#f26b63"/><rect x="7" y="7" width="2.7" height="8" fill="#f5a84b"/><rect x="10" y="6" width="3" height="9" fill="#52d66a"/></svg>
<span class="t" id="t32" style="left:81.5px;top:325.24px;font-size:12px;line-height:14.40px;color:#bbbbbb;letter-spacing:0.731px;">gradle-wrapper.properties</span>
<span class="t" id="t33" style="left:236px;top:325.24px;font-size:12px;line-height:14.40px;color:#7d8082;letter-spacing:0.195px;">(Gradle Version)</span>
<svg style="left:64.9px;top:342px;" width="14" height="15" viewBox="0 0 14 15"><path d="M1 1 H7.4 L10.4 4.2 V14 H1 Z" fill="none" stroke="#a9abad" stroke-width="2" stroke-linejoin="miter"/><path d="M6.8 1.8 V4.8 H9.6" fill="none" stroke="#a9abad" stroke-width="0.9"/><path d="M3 6.6 H8.4 M3 8.6 H8.4 M3 10.6 H8.4" stroke="#4aa0d8" stroke-width="1"/></svg>
<span class="t" id="t34" style="left:81.5px;top:344.24px;font-size:12px;line-height:14.40px;color:#bbbbbb;letter-spacing:0.858px;">proguard-rules.pro</span>
<span class="t" id="t35" style="left:198.5px;top:344.24px;font-size:12px;line-height:14.40px;color:#7d8082;letter-spacing:0.242px;">(ProGuard Rules for app)</span>
<svg style="left:64.9px;top:361px;" width="14" height="15" viewBox="0 0 14 15"><path d="M0 0 H7.6 L11.3 3.9 V7 H9.6 V4.8 L6.8 2 H2 V13.4 H3.6 V15 H0 Z" fill="#a9abad"/><path d="M7 2 V4.5 H9.4" fill="none" stroke="#a9abad" stroke-width="0.9"/><rect x="4" y="9" width="2.7" height="6" fill="#f26b63"/><rect x="7" y="7" width="2.7" height="8" fill="#f5a84b"/><rect x="10" y="6" width="3" height="9" fill="#52d66a"/></svg>
<span class="t" id="t36" style="left:81.5px;top:363.24px;font-size:12px;line-height:14.40px;color:#bbbbbb;letter-spacing:0.671px;">gradle.properties</span>
<span class="t" id="t37" style="left:186.5px;top:363.24px;font-size:12px;line-height:14.40px;color:#7d8082;letter-spacing:0.101px;">(Project Properties)</span>
<svg style="left:63.5px;top:380.5px;" width="16" height="16" viewBox="0 0 16 16"><path d="M6.45 2.2 A6 6 0 0 1 13.8 6.45" fill="none" stroke="#1fa65a" stroke-width="2.3"/><path d="M13.7 9.85 A6 6 0 1 1 5.46 2.56" fill="none" stroke="#7cc757" stroke-width="2.3"/><circle cx="8" cy="8" r="2.7" fill="#12a15b"/></svg>
<span class="t" id="t38" style="left:81.5px;top:382.24px;font-size:12px;line-height:14.40px;color:#bbbbbb;letter-spacing:0.482px;">settings.gradle</span>
<span class="t" id="t39" style="left:170.5px;top:382.24px;font-size:12px;line-height:14.40px;color:#7d8082;letter-spacing:0.191px;">(Project Settings)</span>
<svg style="left:64.9px;top:399px;" width="14" height="15" viewBox="0 0 14 15"><path d="M0 0 H7.6 L11.3 3.9 V7 H9.6 V4.8 L6.8 2 H2 V13.4 H3.6 V15 H0 Z" fill="#a9abad"/><path d="M7 2 V4.5 H9.4" fill="none" stroke="#a9abad" stroke-width="0.9"/><rect x="4" y="9" width="2.7" height="6" fill="#f26b63"/><rect x="7" y="7" width="2.7" height="8" fill="#f5a84b"/><rect x="10" y="6" width="3" height="9" fill="#52d66a"/></svg>
<span class="t" id="t40" style="left:81.5px;top:401.24px;font-size:12px;line-height:14.40px;color:#bbbbbb;letter-spacing:0.528px;">local.properties</span>
<span class="t" id="t41" style="left:175.5px;top:401.24px;font-size:12px;line-height:14.40px;color:#7d8082;letter-spacing:-0.467px;">(SDK Location)</span>
<div style="left:330px;top:52px;width:929px;height:23px;background:#3c3f41;"></div>
<div style="left:330px;top:75px;width:929px;height:3px;background:#4e5254;"></div>
<div style="left:330px;top:74px;width:929px;height:1px;background:#2f3132;"></div>
<div style="left:472px;top:52px;width:1px;height:23px;background:#2b2d2e;"></div>
<svg style="left:340px;top:55.2px;" width="13.4" height="15.3" viewBox="0 0 14 16"><path d="M0 0 H8.6 L11.2 2.6 V4.2 H9.2 V3.4 L7.8 2 H2 V4.2 H0 Z" fill="#a9abad"/><rect x="0" y="4.9" width="13.2" height="7.2" fill="#f9b258"/><path d="M5.4 6.4 L3.2 8.5 L5.4 10.6 M7.8 6.4 L10 8.5 L7.8 10.6" stroke="#4a3a25" stroke-width="1.2" fill="none"/><rect x="0" y="13" width="11.2" height="2.1" fill="#a9abad"/></svg>
<span class="t" id="t42" style="left:357px;top:56.79px;font-size:11px;line-height:13.20px;color:#bbbbbb;letter-spacing:0.597px;">activity_main.xml</span>
<svg style="left:457px;top:60.3px;" width="7.4" height="7.4" viewBox="0 0 7.4 7.4"><path d="M0.8 0.8 L7.2 7.2 M7.2 0.8 L0.8 7.2" stroke="#757779" stroke-width="1.55"/></svg>
<div style="left:473px;top:52px;width:138px;height:24px;background:#4e5254;"></div>
<div style="left:611px;top:52px;width:1px;height:23px;background:#2b2d2e;"></div>
<svg style="left:482px;top:56px;" width="14" height="14" viewBox="0 0 14 14"><circle cx="7" cy="7" r="6.9" fill="#86c9f0"/><circle cx="7" cy="7" r="6.1" fill="url(#cg)"/><path d="M9.2 4.75 H6.8 Q4.7 4.75 4.7 7 Q4.7 9.25 6.8 9.25 H9.2" fill="none" stroke="#3b3f43" stroke-width="1.3"/></svg>
<span class="t" id="t43" style="left:500px;top:56.79px;font-size:11px;line-height:13.20px;color:#c9cbcc;letter-spacing:0.512px;">MainActivity.java</span>
<svg style="left:596px;top:60.3px;" width="7.4" height="7.4" viewBox="0 0 7.4 7.4"><path d="M0.8 0.8 L7.2 7.2 M7.2 0.8 L0.8 7.2" stroke="#757779" stroke-width="1.55"/></svg>
<div style="left:681px;top:52px;width:1px;height:23px;background:#2b2d2e;"></div>
<svg style="left:619.5px;top:56px;" width="15" height="15" viewBox="0 0 15 15"><path d="M6.45 2.2 A6 6 0 0 1 13.8 6.45" fill="none" stroke="#1fa65a" stroke-width="2.3"/><path d="M13.7 9.85 A6 6 0 1 1 5.46 2.56" fill="none" stroke="#7cc757" stroke-width="2.3"/><circle cx="8" cy="8" r="2.7" fill="#12a15b"/></svg>
<span class="t" id="t44" style="left:639px;top:56.79px;font-size:11px;line-height:13.20px;color:#bbbbbb;letter-spacing:1.220px;">app</span>
<svg style="left:665px;top:60.3px;" width="7.4" height="7.4" viewBox="0 0 7.4 7.4"><path d="M0.8 0.8 L7.2 7.2 M7.2 0.8 L0.8 7.2" stroke="#757779" stroke-width="1.55"/></svg>
<div style="left:792px;top:52px;width:1px;height:23px;background:#2b2d2e;"></div>
<svg style="left:691px;top:56px;" width="14" height="14" viewBox="0 0 14 14"><circle cx="7" cy="7" r="6.9" fill="#86c9f0"/><circle cx="7" cy="7" r="6.1" fill="url(#cg)"/><path d="M9.2 4.75 H6.8 Q4.7 4.75 4.7 7 Q4.7 9.25 6.8 9.25 H9.2" fill="none" stroke="#3b3f43" stroke-width="1.3"/></svg>
<span class="t" id="t45" style="left:709px;top:56.79px;font-size:11px;line-height:13.20px;color:#bbbbbb;letter-spacing:0.136px;">Pessoa.java</span>
<svg style="left:777px;top:60.3px;" width="7.4" height="7.4" viewBox="0 0 7.4 7.4"><path d="M0.8 0.8 L7.2 7.2 M7.2 0.8 L0.8 7.2" stroke="#757779" stroke-width="1.55"/></svg>
<div style="left:956px;top:52px;width:1px;height:23px;background:#2b2d2e;"></div>
<svg style="left:803px;top:55.2px;" width="13.4" height="15.3" viewBox="0 0 14 16"><path d="M0 0 H8.6 L11.2 2.6 V4.2 H9.2 V3.4 L7.8 2 H2 V4.2 H0 Z" fill="#a9abad"/><rect x="0" y="4.9" width="13.2" height="7.2" fill="#f9b258"/><path d="M5.4 6.4 L3.2 8.5 L5.4 10.6 M7.8 6.4 L10 8.5 L7.8 10.6" stroke="#4a3a25" stroke-width="1.2" fill="none"/><rect x="0" y="13" width="11.2" height="2.1" fill="#a9abad"/></svg>
<span class="t" id="t46" style="left:820px;top:56.79px;font-size:11px;line-height:13.20px;color:#bbbbbb;letter-spacing:0.610px;">activity_cadastro.xml</span>
<svg style="left:941px;top:60.3px;" width="7.4" height="7.4" viewBox="0 0 7.4 7.4"><path d="M0.8 0.8 L7.2 7.2 M7.2 0.8 L0.8 7.2" stroke="#757779" stroke-width="1.55"/></svg>
<div style="left:1119px;top:52px;width:1px;height:23px;background:#2b2d2e;"></div>
<svg style="left:966px;top:56px;" width="14" height="14" viewBox="0 0 14 14"><circle cx="7" cy="7" r="6.9" fill="#86c9f0"/><circle cx="7" cy="7" r="6.1" fill="url(#cg)"/><path d="M9.2 4.75 H6.8 Q4.7 4.75 4.7 7 Q4.7 9.25 6.8 9.25 H9.2" fill="none" stroke="#3b3f43" stroke-width="1.3"/></svg>
<span class="t" id="t47" style="left:984px;top:56.79px;font-size:11px;line-height:13.20px;color:#bbbbbb;letter-spacing:0.570px;">CadastroAcitivty.java</span>
<svg style="left:1104px;top:60.3px;" width="7.4" height="7.4" viewBox="0 0 7.4 7.4"><path d="M0.8 0.8 L7.2 7.2 M7.2 0.8 L0.8 7.2" stroke="#757779" stroke-width="1.55"/></svg>
<svg style="left:1232px;top:62px;" width="6" height="4" viewBox="0 0 6 4"><path d="M0 0 H6 L3 3.6 Z" fill="#8a8d8f"/></svg>
<svg style="left:1239px;top:60px;" width="8" height="8" viewBox="0 0 8 8"><path d="M0 0.5 H8 M0 2.5 H8 M0 4.5 H8 M0 6.5 H8" stroke="#9a9da0" stroke-width="1" shape-rendering="crispEdges"/></svg>
<span class="t" id="t48" style="left:1249.8px;top:59.53px;font-size:8px;line-height:9.60px;color:#a9b7c6;">1</span>
<div style="left:330px;top:78px;width:929px;height:653px;background:#2b2b2b;"></div>
<div style="left:330px;top:78px;width:37px;height:653px;background:#313335;"></div>
<div style="left:367px;top:78px;width:1px;height:653px;background:#555758;"></div>
<div style="left:1073px;top:78px;width:1px;height:653px;background:#3b3b3b;"></div>
<div style="left:369px;top:469px;width:890px;height:13px;background:#323232;"></div>
<div style="left:1247px;top:81px;width:10px;height:10px;background:#c9962f;"></div>
<div style="left:1246px;top:185px;width:13px;height:2px;background:#c9962f;"></div>
<div style="left:1246px;top:200px;width:13px;height:2px;background:#c9962f;"></div>
<span class="t" id="t49" style="left:373px;top:80.04px;font-size:12px;line-height:14.40px;color:#cc7832;font-family:'DejaVu Sans Mono','Liberation Mono',monospace;letter-spacing:-0.125px;">package</span>
<span class="t" id="t50" style="left:429.6px;top:80.04px;font-size:12px;line-height:14.40px;color:#a9b7c6;font-family:'DejaVu Sans Mono','Liberation Mono',monospace;letter-spacing:-0.224px;">com.academiajedi.androiddveloper.exemplosqlite</span>
<span class="t" id="t51" style="left:750.6px;top:80.04px;font-size:12px;line-height:14.40px;color:#cc7832;font-family:'DejaVu Sans Mono','Liberation Mono',monospace;letter-spacing:0px;">;</span>
<span class="t" id="t52" style="left:373px;top:110.04px;font-size:12px;line-height:14.40px;color:#cc7832;font-family:'DejaVu Sans Mono','Liberation Mono',monospace;letter-spacing:-0.125px;">import</span>
<div style="left:422px;top:109px;width:21px;height:15px;background:#3b3b3b;"></div>
<span class="t" id="t53" style="left:423.3px;top:110.04px;font-size:12px;line-height:14.40px;color:#8c8c8c;font-family:'DejaVu Sans Mono','Liberation Mono',monospace;letter-spacing:-0.125px;">...</span>
<svg style="left:363px;top:113px;" width="9" height="9" viewBox="0 0 9 9"><rect x="0.5" y="0.5" width="8" height="8" fill="#2b2b2b" stroke="#6e7072" stroke-width="1"/><path d="M2 4.5 H7 M4.5 2 V7" stroke="#d0d0d0" stroke-width="1"/></svg>
<div style="left:0px;top:731px;width:1280px;height:1px;background:#292b2c;"></div>
<div style="left:0px;top:732px;width:1280px;height:1px;background:#4d4f51;"></div>
<div style="left:0px;top:733px;width:1280px;height:20px;background:#3c3f41;"></div>
<div style="left:0px;top:752px;width:1280px;height:1px;background:#484a4c;"></div>
<svg style="left:29px;top:736px;" width="13" height="13" viewBox="0 0 13 13"><rect x="0" y="0" width="13" height="13" fill="#8a8d8f"/><rect x="1" y="2.8" width="11" height="9.2" fill="#000"/><path d="M2.6 5.4 L5.6 7.8 L2.6 10.2" stroke="#fff" stroke-width="1.1" fill="none"/><rect x="6.4" y="10" width="3.6" height="1.1" fill="#fff"/></svg>
<span class="t" id="t54" style="left:46.3px;top:736.29px;font-size:11px;line-height:13.20px;color:#bbbbbb;letter-spacing:0.746px;">Terminal</span>
<svg style="left:117px;top:735.5px;" width="13" height="15" viewBox="0 0 14 16"><path d="M3 6.2 a4 4 0 0 1 8 0 Z" fill="#7fb238"/><rect x="3" y="6.9" width="8" height="6.3" rx="0.8" fill="#7fb238"/><rect x="0.6" y="6.9" width="1.8" height="5" rx="0.9" fill="#7fb238"/><rect x="11.6" y="6.9" width="1.8" height="5" rx="0.9" fill="#7fb238"/><rect x="4.2" y="12.5" width="1.9" height="3.3" rx="0.9" fill="#7fb238"/><rect x="7.9" y="12.5" width="1.9" height="3.3" rx="0.9" fill="#7fb238"/><path d="M4.4 2.6 L3.4 0.9 M9.6 2.6 L10.6 0.9" stroke="#7fb238" stroke-width="0.7"/><circle cx="5.2" cy="4.3" r="0.55" fill="#3c3f41"/><circle cx="8.8" cy="4.3" r="0.55" fill="#3c3f41"/></svg>
<span class="t" id="t55" style="left:134px;top:736.29px;font-size:11px;line-height:13.20px;color:#bbbbbb;letter-spacing:0.736px;"><u>6</u>: Android Monitor</span>
<svg style="left:260px;top:736px;" width="12" height="12" viewBox="0 0 12 12"><defs><linearGradient id="mg" x1="0" y1="0" x2="0" y2="1"><stop offset="0" stop-color="#f7cc94"/><stop offset="1" stop-color="#eeb062"/></linearGradient></defs><rect x="0" y="0" width="12" height="12" fill="#fce0b8"/><rect x="1.2" y="1.2" width="9.6" height="9.6" fill="url(#mg)"/><path d="M3 4.4 H7.6 M8.6 4.4 H9.8 M3 6.5 H4.8 M6 6.5 H7.8 M8.8 6.5 H9.8 M3 8.5 H4.8 M6 8.5 H9.8" stroke="#6b7a8c" stroke-width="0.9"/></svg>
<span class="t" id="t56" style="left:277px;top:736.29px;font-size:11px;line-height:13.20px;color:#bbbbbb;letter-spacing:0.242px;"><u>0</u>: Messages</span>
<svg style="left:363px;top:735px;" width="14" height="15" viewBox="0 0 14 15"><path d="M4.2 4.6 Q4.4 2.4 8.6 2.4 Q12.8 2.6 12.8 6 L12.8 7 H4.2 Z" fill="#8e9193"/><rect x="4.6" y="5.4" width="8" height="6.4" rx="1.6" fill="#f4b97c"/><rect x="3.9" y="7.4" width="9.4" height="2.6" rx="1.2" fill="#f4b97c"/><path d="M5 14.2 L6.2 11.6 H11 L12.2 14.2 Z" fill="#2f9fe0"/><rect x="6.9" y="10.8" width="3.4" height="1.6" fill="#f0a560"/><circle cx="7.2" cy="8.6" r="0.65" fill="#2a2a2a"/><circle cx="10" cy="8.6" r="0.65" fill="#2a2a2a"/><ellipse cx="3.6" cy="4.2" rx="3.3" ry="3" fill="#fafafa"/><path d="M1.9 3.3 H5.3 M1.9 5.1 H5.3" stroke="#2a2a2a" stroke-width="0.9"/></svg>
<span class="t" id="t57" style="left:380.5px;top:736.29px;font-size:11px;line-height:13.20px;color:#bbbbbb;letter-spacing:0.241px;">TODO</span>
<svg style="left:1057px;top:736px;" width="13" height="13" viewBox="0 0 13 13"><path d="M2 0 H10.2 Q12.2 0 12.2 2 V6.6 Q12.2 8.6 10.4 8.6 V12 L7.6 8.6 H2 Q0 8.6 0 6.6 V2 Q0 0 2 0 Z" fill="#5e6163"/></svg>
<span class="t" id="t58" style="left:1075px;top:736.29px;font-size:11px;line-height:13.20px;color:#bbbbbb;letter-spacing:0.282px;">Event Log</span>
<svg style="left:1151px;top:735.5px;" width="12.4" height="12.6" viewBox="0 0 12.4 12.6"><rect x="0.5" y="0.5" width="11.4" height="11.6" fill="#3c3f41" stroke="#8a8c8e" stroke-width="1"/><rect x="0" y="0" width="12.4" height="2" fill="#5fb0e0"/><rect x="2" y="3.6" width="8.4" height="7" fill="#5a9fca"/><path d="M3.2 5.4 H9 M3.2 7.1 H8 M3.2 8.8 H7" stroke="#2f4050" stroke-width="0.9"/></svg>
<span class="t" id="t59" style="left:1168px;top:736.29px;font-size:11px;line-height:13.20px;color:#bbbbbb;letter-spacing:0.374px;">Gradle Console</span>
<div style="left:0px;top:753px;width:1280px;height:20px;background:#3c3f41;border-radius:0 0 5px 5px;"></div>
<svg style="left:4px;top:755px;" width="16" height="16" viewBox="0 0 16 16"><rect x="1" y="1" width="13.4" height="12" fill="#6b6e70" stroke="#c4c4c4" stroke-width="1.2"/><rect x="1" y="14.2" width="13.6" height="1.2" fill="#c4c4c4"/></svg>
<span class="t" id="t60" style="left:31px;top:756.82px;font-size:11.5px;line-height:13.80px;color:#bbbbbb;letter-spacing:0.285px;">Gradle build finished in 6s 274ms (5 minutes ago)</span>
<span class="t" id="t61" style="left:950px;top:756.82px;font-size:11.5px;line-height:13.80px;color:#bbbbbb;letter-spacing:0.636px;">32:1</span>
<span class="t" id="t62" style="left:985.4px;top:756.82px;font-size:11.5px;line-height:13.80px;color:#bbbbbb;letter-spacing:-0.922px;">LF</span>
<svg style="left:997.5px;top:759px;" width="5" height="9" viewBox="0 0 5 9"><path d="M0 3.4 L2.5 0.2 L5 3.4 Z M0 5.2 L2.5 8.4 L5 5.2 Z" fill="#a4a7a9"/></svg>
<span class="t" id="t63" style="left:1014.5px;top:756.82px;font-size:11.5px;line-height:13.80px;color:#bbbbbb;letter-spacing:0.177px;">UTF-8</span>
<svg style="left:1049px;top:759px;" width="5" height="9" viewBox="0 0 5 9"><path d="M0 3.4 L2.5 0.2 L5 3.4 Z M0 5.2 L2.5 8.4 L5 5.2 Z" fill="#a4a7a9"/></svg>
<span class="t" id="t64" style="left:1063px;top:756.82px;font-size:11.5px;line-height:13.80px;color:#777a7c;letter-spacing:0.588px;">Context: &lt;no context&gt;</span>
<svg style="left:0;top:0" width="1280" height="777" viewBox="0 0 1280 777"><rect x="1217" y="762" width="7" height="6.2" rx="0.8" fill="#a9abad"/><path d="M1215.5 762.4 V760.6 A2 2 0 0 1 1219.5 760.6 V762" fill="none" stroke="#a9abad" stroke-width="1.1"/><path d="M1219 764 H1222 M1220.5 764 V766.4" stroke="#3c3f41" stroke-width="1.1"/><path d="M1240 761 V758.6 Q1240 756.2 1243.5 756.2 Q1247 756.2 1247 758.6 V761" fill="none" stroke="#9c9ea0" stroke-width="1"/><path d="M1243.5 757.6 V759" stroke="#9c9ea0" stroke-width="0.9"/><path d="M1237.4 761.4 H1249.6" stroke="#9c9ea0" stroke-width="1.1"/><path d="M1238.9 762.6 V765 Q1238.9 768.6 1243.5 768.6 Q1248.1 768.6 1248.1 765 V762.6" fill="none" stroke="#9c9ea0" stroke-width="1"/><rect x="1241" y="763.2" width="1.2" height="1.3" fill="#9c9ea0"/><rect x="1244.8" y="763.2" width="1.2" height="1.3" fill="#9c9ea0"/><path d="M1241.2 767.2 Q1243.5 765 1245.8 767.2" fill="none" stroke="#9c9ea0" stroke-width="1"/><path d="M1239 770 H1248.2" stroke="#9c9ea0" stroke-width="1"/><defs><linearGradient id="eg" x1="0" y1="0" x2="0" y2="1"><stop offset="0" stop-color="#ee7275"/><stop offset="1" stop-color="#d9484d"/></linearGradient></defs><circle cx="1267" cy="763" r="6.1" fill="url(#eg)"/><rect x="1266" y="759" width="2" height="5.4" fill="#fff"/><rect x="1266" y="765.4" width="2" height="1.8" fill="#fff"/><path d="M1276.6 772.6 L1280 769.4" stroke="#6e7072" stroke-width="1"/></svg>
<div style="left:228px;top:136px;width:824px;height:478px;border-radius:5px 5px 6px 6px;background:#3c3f41;box-shadow:0 0 1px 0.5px rgba(0,0,0,.4),0 18px 40px 6px rgba(0,0,0,.5),0 2px 12px rgba(0,0,0,.35);"></div>
<div style="left:228px;top:136px;width:824px;height:22px;border-radius:5px 5px 0 0;background:linear-gradient(#ececec,#e4e4e4 45%,#d2d2d2);box-shadow:inset 0 1px 0 #f6f6f6;"></div>
<div style="left:228px;top:157px;width:824px;height:1px;background:#b4b4b4;"></div>
<div style="left:236px;top:141px;width:12px;height:12px;border-radius:50%;background:#fc5b57;box-shadow:inset 0 0 0 0.6px #df4744;"></div>
<div style="left:256px;top:141px;width:12px;height:12px;border-radius:50%;background:#d9d9d9;box-shadow:inset 0 0 0 0.6px #c3c3c3;"></div>
<div style="left:276px;top:141px;width:12px;height:12px;border-radius:50%;background:#17bf4a;box-shadow:inset 0 0 0 0.6px #14a53f;"></div>
<span class="t" id="t65" style="left:584.6px;top:139.50px;font-size:13px;line-height:15.60px;color:#454140;letter-spacing:0.061px;-webkit-text-stroke:0;">New Resource File</span>
<span class="t" id="t66" style="left:240.3px;top:170.60px;font-size:13px;line-height:15.60px;color:#bbbbbb;letter-spacing:0.289px;">File name:</span>
<span class="t" id="t67" style="left:240.3px;top:200.40px;font-size:13px;line-height:15.60px;color:#bbbbbb;letter-spacing:0.447px;">Root element:</span>
<span class="t" id="t68" style="left:240px;top:230.20px;font-size:13px;line-height:15.60px;color:#bbbbbb;letter-spacing:0.303px;">Source set:</span>
<span class="t" id="t69" style="left:240.3px;top:259.80px;font-size:13px;line-height:15.60px;color:#bbbbbb;letter-spacing:0.539px;">Directory name:</span>
<span class="t" id="t70" style="left:240px;top:284.70px;font-size:13px;line-height:15.60px;color:#bbbbbb;letter-spacing:0.601px;">Available qualifiers:</span>
<span class="t" id="t71" style="left:594.5px;top:284.70px;font-size:13px;line-height:15.60px;color:#bbbbbb;letter-spacing:0.573px;">Chosen qualifiers:</span>
<div style="left:352px;top:167px;width:533px;height:21px;box-sizing:border-box;border-radius:2.5px;background:#45494a;border:1.5px solid #4d7099;box-shadow:0 0 0 1.3px rgba(74,109,149,.6);"></div>
<span class="t" id="t72" style="left:358px;top:170.60px;font-size:13px;line-height:15.60px;color:#c8c8c8;letter-spacing:0.358px;">item_pessoa</span>
<div style="left:436px;top:170px;width:1px;height:16px;background:#c4c4c4;"></div>
<div style="left:351px;top:196px;width:536px;height:23px;box-sizing:border-box;background:#45494a;border:1px solid #6a6d6e;"></div>
<span class="t" id="t73" style="left:357.4px;top:199.80px;font-size:13px;line-height:15.60px;color:#bbbbbb;letter-spacing:0.330px;">LinearLayout</span>
<div style="left:351px;top:225px;width:536px;height:25px;box-sizing:border-box;border-radius:4px;background:#3c3f41;border:1px solid #6a6d6e;"></div>
<div style="left:865px;top:226px;width:1px;height:23px;background:#6a6d6e;"></div>
<span class="t" id="t74" style="left:356.6px;top:230.20px;font-size:13px;line-height:15.60px;color:#bbbbbb;letter-spacing:0.471px;">main</span>
<svg style="left:870px;top:234px;" width="10" height="7" viewBox="0 0 10 7"><path d="M0.3 0.3 H9.7 L5 6.6 Z" fill="#b8b8b8"/></svg>
<div style="left:351px;top:256px;width:536px;height:23px;box-sizing:border-box;background:#45494a;border:1px solid #6a6d6e;"></div>
<span class="t" id="t75" style="left:357.4px;top:259.80px;font-size:13px;line-height:15.60px;color:#bbbbbb;letter-spacing:0.479px;">layout</span>
<div style="left:240px;top:305px;width:293px;height:256px;box-sizing:border-box;border:1px solid #323435;background:#3c3f41;"></div>
<div style="left:594px;top:305px;width:293px;height:256px;box-sizing:border-box;border:1px solid #323435;background:#3c3f41;"></div>
<span class="t" id="t76" style="left:688.5px;top:386.60px;font-size:13px;line-height:15.60px;color:#7d7f80;letter-spacing:0.862px;">Nothing to show</span>
<div style="left:241px;top:306px;width:291px;height:254px;overflow:hidden;">
<div style="left:0px;top:0px;width:291px;height:19px;background:#2f65ca;"></div>
<svg style="left:7px;top:1.5px;" width="16" height="16" viewBox="0 0 16 16"><path d="M5 0.5 H11.5 L15 4 V13.5 H5 Z" fill="#f4f4f4"/><rect x="11" y="6.2" width="3" height="5.6" fill="#e7c347"/><path d="M11 8 H14 M11 9.8 H14" stroke="#a58618" stroke-width="0.6"/><circle cx="5.6" cy="10.2" r="5.2" fill="#7fa6c0"/><path d="M2.4 7.6 Q3.6 6 6.2 6.2 Q7.2 7.4 6 8.4 Q5.2 9.6 3.8 9.2 Q2.6 9 2.4 7.6 Z M5.2 10.2 Q7.6 9.8 8.6 11.4 Q8 13.6 6.4 14.6 Q5.4 12.4 5.2 10.2 Z" fill="#f4f7f9"/></svg>
<span class="t" id="t77" style="left:26px;top:2.00px;font-size:13px;line-height:15.60px;color:#ffffff;letter-spacing:-0.265px;">Country Code</span>
<svg style="left:7px;top:20.5px;" width="16" height="16" viewBox="0 0 16 16"><path d="M5 0.5 H11.5 L15 4 V13.5 H5 Z" fill="#f4f4f4"/><rect x="11" y="6.2" width="3" height="5.6" fill="#e7c347"/><path d="M11 8 H14 M11 9.8 H14" stroke="#a58618" stroke-width="0.6"/><circle cx="5.6" cy="10.2" r="5.2" fill="#86b23a"/><path d="M5.6 9 V14" stroke="#fff" stroke-width="1.1"/><path d="M3.8 11.4 A2.6 2.6 0 0 1 3.8 7.6 M7.4 11.4 A2.6 2.6 0 0 0 7.4 7.6" stroke="#fff" stroke-width="0.9" fill="none"/></svg>
<span class="t" id="t78" style="left:26px;top:21.00px;font-size:13px;line-height:15.60px;color:#bbbbbb;letter-spacing:-0.052px;">Network Code</span>
<svg style="left:7px;top:39.5px;" width="16" height="16" viewBox="0 0 16 16"><circle cx="8" cy="8" r="7.2" fill="#6a9fca"/><path d="M3.6 3.4 Q7 1.6 8.6 4.6 Q7.8 7 5.6 7.4 Q3.4 6.4 3.6 3.4 Z M7.2 8.6 Q10.6 8 11.6 10.8 Q10.4 14 8.4 14.2 Q7 11.6 7.2 8.6 Z M11.2 3.2 Q13.4 4.2 13.8 6.2 L12 6 Z" fill="#274b6a"/></svg>
<span class="t" id="t79" style="left:26px;top:40.00px;font-size:13px;line-height:15.60px;color:#bbbbbb;letter-spacing:-0.503px;">Locale</span>
<svg style="left:7px;top:58.5px;" width="16" height="16" viewBox="0 0 16 16"><rect x="2" y="0.6" width="12.2" height="15.2" fill="url(#qg)"/><path d="M3 8 H13 M5.8 5.4 L3 8 L5.8 10.6" stroke="#fff" stroke-width="1.7" fill="none"/></svg>
<span class="t" id="t80" style="left:26px;top:59.00px;font-size:13px;line-height:15.60px;color:#bbbbbb;letter-spacing:-0.077px;">Layout Direction</span>
<svg style="left:7px;top:77.5px;" width="16" height="16" viewBox="0 0 16 16"><rect x="2" y="0.6" width="12.2" height="15.2" fill="url(#qg)"/><path d="M3 8 H13 M8 2.6 V13.4" stroke="#fff" stroke-width="1.4"/><path d="M5 6 L3 8 L5 10 M11 6 L13 8 L11 10 M6 4.6 L8 2.6 L10 4.6 M6 11.4 L8 13.4 L10 11.4" stroke="#fff" stroke-width="1.3" fill="none"/></svg>
<span class="t" id="t81" style="left:26px;top:78.00px;font-size:13px;line-height:15.60px;color:#bbbbbb;letter-spacing:-0.310px;">Smallest Screen Width</span>
<svg style="left:7px;top:96.5px;" width="16" height="16" viewBox="0 0 16 16"><rect x="2" y="0.6" width="12.2" height="15.2" fill="url(#qg)"/><path d="M3.2 8 H12.8 M5.6 5.6 L3.2 8 L5.6 10.4 M10.4 5.6 L12.8 8 L10.4 10.4" stroke="#fff" stroke-width="1.6" fill="none"/></svg>
<span class="t" id="t82" style="left:26px;top:97.00px;font-size:13px;line-height:15.60px;color:#bbbbbb;letter-spacing:-0.295px;">Screen Width</span>
<svg style="left:7px;top:115.5px;" width="16" height="16" viewBox="0 0 16 16"><rect x="2" y="0.6" width="12.2" height="15.2" fill="url(#qg)"/><path d="M8 2.4 V13.6 M5.6 4.8 L8 2.4 L10.4 4.8 M5.6 11.2 L8 13.6 L10.4 11.2" stroke="#fff" stroke-width="1.6" fill="none"/></svg>
<span class="t" id="t83" style="left:26px;top:116.00px;font-size:13px;line-height:15.60px;color:#bbbbbb;letter-spacing:-0.216px;">Screen Height</span>
<svg style="left:7px;top:134.5px;" width="16" height="16" viewBox="0 0 16 16"><rect x="2" y="0.6" width="12.2" height="15.2" fill="url(#qg)"/><path d="M4 12.4 L12 4 M7.6 3.6 H12.4 V8.4 M3.6 8.8 V12.6 H7" stroke="#fff" stroke-width="1.7" fill="none"/></svg>
<span class="t" id="t84" style="left:26px;top:135.00px;font-size:13px;line-height:15.60px;color:#bbbbbb;letter-spacing:-1.066px;">Size</span>
<svg style="left:7px;top:153.5px;" width="16" height="16" viewBox="0 0 16 16"><rect x="0" y="2.2" width="16" height="12.6" fill="url(#qg)"/><path d="M4 5.6 V8.6 H6.4 M6.4 5.6 V11" stroke="#fff" stroke-width="1" fill="none"/><rect x="7.8" y="6.4" width="1" height="1.2" fill="#fff"/><rect x="7.8" y="9" width="1" height="1.2" fill="#fff"/><path d="M10 5.7 H12 V10.9 H10 M10.4 8.3 H12" stroke="#fff" stroke-width="1" fill="none"/></svg>
<span class="t" id="t85" style="left:26px;top:154.00px;font-size:13px;line-height:15.60px;color:#bbbbbb;letter-spacing:-0.515px;">Ratio</span>
<svg style="left:7px;top:172.5px;" width="16" height="16" viewBox="0 0 16 16"><rect x="0.7" y="0.7" width="9.2" height="13" fill="none" stroke="#b5b8ba" stroke-width="1.4"/><rect x="2.4" y="2.6" width="5.8" height="2.4" fill="#6fa7cf"/><rect x="0" y="5.6" width="16" height="10" rx="1" fill="#b5b8ba"/><rect x="2.4" y="7.4" width="10.6" height="6.4" fill="#6fa7cf"/><rect x="14.1" y="9.8" width="0.9" height="1.6" fill="#3c3f41"/></svg>
<span class="t" id="t86" style="left:26px;top:173.00px;font-size:13px;line-height:15.60px;color:#bbbbbb;letter-spacing:-0.079px;">Orientation</span>
<svg style="left:7px;top:191.5px;" width="16" height="16" viewBox="0 0 16 16"><rect x="3.4" y="0.4" width="9.4" height="12.6" fill="#b9bbbd"/><rect x="5" y="2.2" width="6.2" height="9.4" fill="#6fa7cf"/><rect x="1.2" y="13.2" width="13.6" height="2.4" fill="#8bc34a"/></svg>
<span class="t" id="t87" style="left:26px;top:192.00px;font-size:13px;line-height:15.60px;color:#bbbbbb;letter-spacing:-0.507px;">UI Mode</span>
<svg style="left:7px;top:210.5px;" width="16" height="16" viewBox="0 0 16 16"><circle cx="8" cy="8" r="7.2" fill="#9563ad"/><path d="M10.4 2.8 A5.2 5.2 0 1 1 3.4 10.8 A5.6 5.6 0 0 0 10.4 2.8 Z" fill="#d8c2e4"/></svg>
<span class="t" id="t88" style="left:26px;top:211.00px;font-size:13px;line-height:15.60px;color:#bbbbbb;letter-spacing:-0.187px;">Night Mode</span>
<svg style="left:7px;top:229.5px;" width="16" height="16" viewBox="0 0 16 16"><rect x="1" y="0" width="9" height="16" fill="url(#qg)"/><circle cx="9.6" cy="8.4" r="5.4" fill="#3c3f41" stroke="#c4c7c9" stroke-width="1.1"/><path d="M7.6 6.4 h1.6 v1.6 h-1.6z M10 6.4 h1.6 v1.6 h-1.6z M7.6 8.8 h1.6 v1.6 h-1.6z M10 8.8 h1.6 v1.6 h-1.6z" fill="#8cc4ea"/></svg>
<span class="t" id="t89" style="left:26px;top:230.00px;font-size:13px;line-height:15.60px;color:#bbbbbb;letter-spacing:-0.277px;">Density</span>
<svg style="left:7px;top:248.5px;" width="16" height="16" viewBox="0 0 16 16"><rect x="2" y="0.6" width="12.2" height="15.2" fill="url(#qg)"/><circle cx="6" cy="5.6" r="1.6" fill="#fff"/></svg>
<span class="t" id="t90" style="left:26px;top:249.00px;font-size:13px;line-height:15.60px;color:#bbbbbb;letter-spacing:-0.291px;">Touch Screen</span>
</div>
<div style="left:542px;top:394px;width:43px;height:25px;box-sizing:border-box;border-radius:3.5px;border:1px solid #5f6365;background:linear-gradient(#515658,#44494b);"></div>
<span class="t" id="t91" style="left:554.6px;top:398.85px;font-size:14px;line-height:16.80px;color:#c4c4c4;letter-spacing:1.500px;">&gt;&gt;</span>
<div style="left:542px;top:426px;width:43px;height:25px;box-sizing:border-box;border-radius:4px;border:1px solid #585b5d;background:#3c3f41;"></div>
<span class="t" id="t92" style="left:555px;top:430.85px;font-size:14px;line-height:16.80px;color:#828486;letter-spacing:1.500px;">&lt;&lt;</span>
<div style="left:244px;top:579px;width:23px;height:23px;box-sizing:border-box;border-radius:50%;border:1px solid #5d6062;background:linear-gradient(#4c5052,#424648);"></div>
<span class="t" id="t93" style="left:250.6px;top:580.19px;font-size:18.5px;line-height:22.20px;color:#1ea3e2;font-weight:bold;">?</span>
<div style="left:900px;top:578px;width:65px;height:25px;box-sizing:border-box;border-radius:4px;border:1px solid #5f6365;background:linear-gradient(#515658,#44494b);"></div>
<span class="t" id="t94" style="left:912px;top:583.10px;font-size:13px;line-height:15.60px;color:#c4c4c4;letter-spacing:0.266px;">Cancel</span>
<div style="left:972px;top:578px;width:65px;height:25px;box-sizing:border-box;border-radius:4px;border:1px solid #55606f;background:linear-gradient(#385071,#283d5b);"></div>
<span class="t" id="t95" style="left:996px;top:583.10px;font-size:13px;line-height:15.60px;color:#d4d4d4;">OK</span>
</div></body></html>
